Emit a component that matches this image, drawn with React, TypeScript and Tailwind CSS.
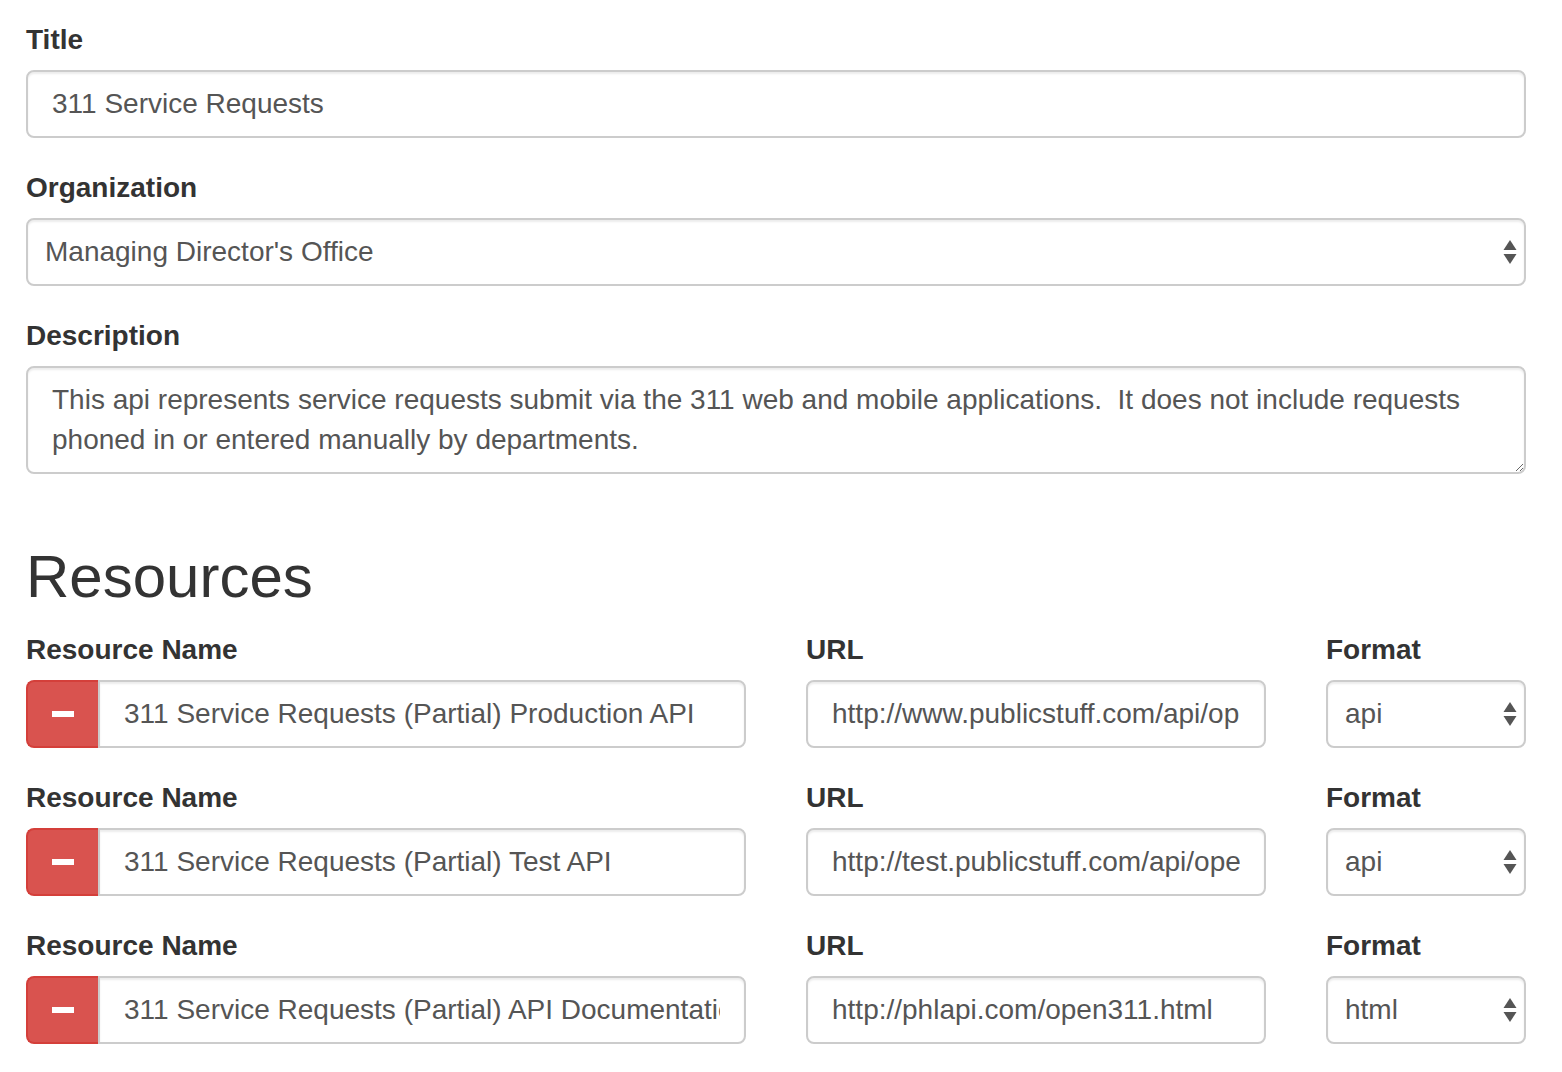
import React from 'react';

const font = { fontFamily: '"Liberation Sans", Arial, Helvetica, sans-serif' };

const inputCls =
  'block w-full h-[68px] border-2 border-[#ccc] bg-white px-[24px] text-[28px] leading-[40px] text-[#555] shadow-[inset_0_2px_2px_rgba(0,0,0,0.075)] outline-none';

const Label: React.FC<{ children: React.ReactNode }> = ({ children }) => (
  <label className="block mb-[10px] text-[28px] leading-[40px] font-bold text-[#333]">{children}</label>
);

const SelectBox: React.FC<{ value: string; options: string[]; padLeft?: string }> = ({ value, options, padLeft = 'pl-[17px]' }) => (
  <div className="relative">
    <select
      defaultValue={value}
      className={`${inputCls} rounded-[8px] appearance-none ${padLeft} pr-[50px]`}
    >
      {options.map(o => (
        <option key={o} value={o}>{o}</option>
      ))}
    </select>
    {/* up / down arrows */}
    <svg className="absolute right-[9px] top-1/2 -translate-y-1/2 pointer-events-none" width="14" height="26" viewBox="0 0 14 26">
      <path d="M7 1 L13.5 11 L0.5 11 Z" fill="#555" />
      <path d="M0.5 15 L13.5 15 L7 25 Z" fill="#555" />
    </svg>
  </div>
);

interface Resource {
  name: string;
  url: string;
  format: string;
}

const resources: Resource[] = [
  { name: '311 Service Requests (Partial) Production API', url: 'http://www.publicstuff.com/api/open311/requests.json', format: 'api' },
  { name: '311 Service Requests (Partial) Test API', url: 'http://test.publicstuff.com/api/open311/requests.json', format: 'api' },
  { name: '311 Service Requests (Partial) API Documentation', url: 'http://phlapi.com/open311.html', format: 'html' },
];

const formats = ['api', 'html', 'csv', 'json', 'xml'];

const ResourceRow: React.FC<{ r: Resource }> = ({ r }) => (
  <div className="grid grid-cols-[720px_460px_200px] gap-x-[60px] mb-[30px]">
    <div>
      <Label>Resource Name</Label>
      <div className="flex">
        <button className="w-[72px] h-[68px] shrink-0 flex items-center justify-center rounded-l-[8px] border-2 border-r-0 border-[#d43f3a] bg-[#d9534f]">
          <span className="block w-[22px] h-[6px] bg-white" />
        </button>
        <input
          defaultValue={r.name}
          className={`${inputCls} rounded-r-[8px] rounded-l-none`}
        />
      </div>
    </div>
    <div>
      <Label>URL</Label>
      <input defaultValue={r.url} className={`${inputCls} rounded-[8px]`} />
    </div>
    <div>
      <Label>Format</Label>
      <SelectBox value={r.format} options={formats} />
    </div>
  </div>
);

export default function App() {
  return (
    <div className="min-h-screen bg-white antialiased" style={font}>
      <div className="w-[1500px] ml-[26px] pt-[20px] flex flex-col">
        <div className="mb-[30px]">
          <Label>Title</Label>
          <input defaultValue="311 Service Requests" className={`${inputCls} rounded-[8px]`} />
        </div>

        <div className="mb-[30px]">
          <Label>Organization</Label>
          <SelectBox
            value="Managing Director's Office"
            options={["Managing Director's Office", 'Office of Innovation and Technology', 'Department of Records']}
          />
        </div>

        <div className="mb-[30px]">
          <Label>Description</Label>
          <textarea
            defaultValue="This api represents service requests submit via the 311 web and mobile applications.  It does not include requests phoned in or entered manually by departments."
            className="block w-full h-[108px] rounded-[8px] border-2 border-[#ccc] bg-white px-[24px] py-[12px] text-[28px] leading-[40px] text-[#555] shadow-[inset_0_2px_2px_rgba(0,0,0,0.075)] outline-none resize-y"
          />
        </div>

        <h2 className="mt-[40px] mb-[20px] text-[60px] leading-[66px] font-medium text-[#333]">Resources</h2>

        {resources.map(r => (
          <ResourceRow key={r.name} r={r} />
        ))}
      </div>
    </div>
  );
}
